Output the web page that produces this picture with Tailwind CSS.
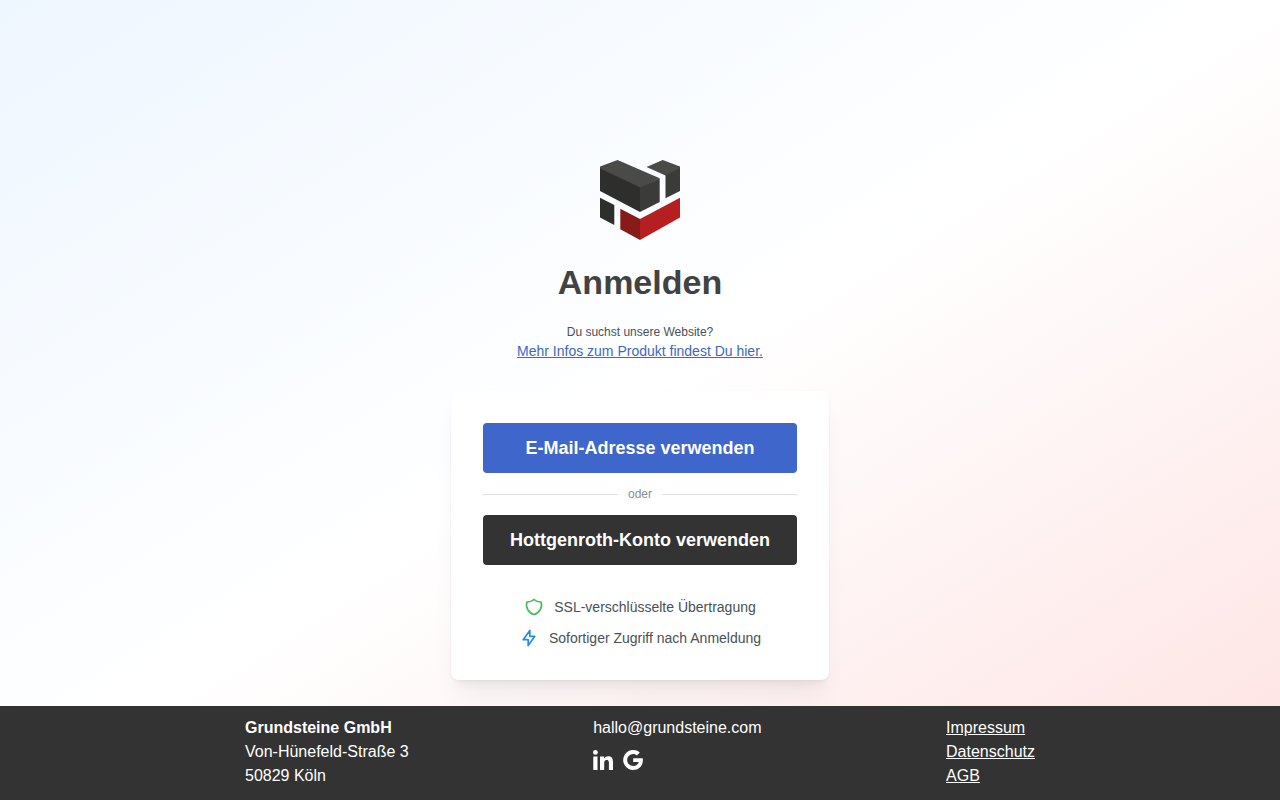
<!DOCTYPE html>
<html lang="de">
<head>
    <meta charset="UTF-8">
    <meta name="viewport" content="width=device-width, initial-scale=1.0">
    <title>Anmelden - Grundsteine</title>

    <!-- Tailwind CSS -->
    <script src="https://cdn.jsdelivr.net/npm/@tailwindcss/browser@4"></script>
</head>
<body class="font-['Liberation_Sans',Arial,sans-serif]">

    <div class="min-h-screen flex flex-col bg-[linear-gradient(to_bottom_right,#eef6ff,#ffffff,#fee2e2)]">

        <!-- Login -->
        <main class="flex-1 flex flex-col items-center px-4 pt-40 pb-6">
            <svg class="size-20" viewBox="0 0 80 80" role="img" aria-label="Grundsteine">
                <path fill="#4a4a48" d="M0 6.500 17.500 0 59.700 18.300 40 28 0 10z"/>
                <path fill="#2e2e2c" d="M0 8.500 40 27.300V52L0 31z"/>
                <path fill="#3b3b3a" d="M40 27.300 59.700 18.300V42L40 52z"/>
                <path fill="#4a4a48" d="M46.500 7 62.700 0 80 6.500V9L66 15.800z"/>
                <path fill="#3b3b3a" d="M65.500 15.300 80 8.300V31L65.500 38.300z"/>
                <path fill="#2e2e2c" d="M0 37.700 14.300 45V65L0 57.500z"/>
                <path fill="#881a1a" d="M20.300 48.800 40 59V80L20.300 69.200z"/>
                <path fill="#b51f20" d="M40 59 80 37.700V57.500L40 80z"/>
            </svg>

            <h1 class="mt-5 text-[34px] leading-[44px] font-bold text-[#424242]">Anmelden</h1>

            <div class="mt-[19px] text-center text-[#495057]">
                <p class="text-xs leading-[18px]">Du suchst unsere Website?</p>
                <p class="text-sm leading-5"><a href="#" class="text-[#3e66cb] underline">Mehr Infos zum Produkt findest Du hier.</a></p>
            </div>

            <div class="mt-[30px] w-full max-w-[378px] p-8 rounded-lg bg-white shadow-[0_1px_3px_rgba(0,0,0,0.05),0_20px_25px_-5px_rgba(0,0,0,0.05),0_10px_10px_-5px_rgba(0,0,0,0.04)]">
                <button type="button" class="block w-full h-[50px] rounded bg-[#3e66cb] text-lg font-bold text-white">E-Mail-Adresse verwenden</button>
                <div class="flex items-center gap-2.5 h-[42px] text-xs text-[#868e96]">
                    <span class="flex-1 border-t border-[#dee2e6]"></span>
                    oder
                    <span class="flex-1 border-t border-[#dee2e6]"></span>
                </div>
                <button type="button" class="block w-full h-[50px] rounded bg-[#333333] text-lg font-bold text-white">Hottgenroth-Konto verwenden</button>

                <ul class="mt-[31px] flex flex-col items-center gap-2.5 text-sm text-[#495057]">
                    <li class="flex items-center gap-2.5 h-[21px]">
                        <svg class="size-5 text-[#40c057]" viewBox="0 0 24 24" fill="none" stroke="currentColor" stroke-width="2" stroke-linecap="round" stroke-linejoin="round">
                            <path d="M12 3a12 12 0 0 0 8.500 3a12 12 0 0 1 -8.500 15a12 12 0 0 1 -8.500 -15a12 12 0 0 0 8.500 -3"/>
                        </svg>
                        SSL-verschlüsselte Übertragung
                    </li>
                    <li class="flex items-center gap-2.5 h-[21px]">
                        <svg class="size-5 text-[#228be6]" viewBox="0 0 24 24" fill="none" stroke="currentColor" stroke-width="2" stroke-linecap="round" stroke-linejoin="round">
                            <path d="M13 3v7h6l-8 11v-7h-6l8 -11"/>
                        </svg>
                        Sofortiger Zugriff nach Anmeldung
                    </li>
                </ul>
            </div>
        </main>

        <!-- Footer -->
        <footer class="bg-[#333333] px-4 pt-2.5 pb-3 text-base leading-6 text-white">
            <div class="max-w-[790px] mx-auto flex flex-wrap justify-between gap-x-6">
                <address class="not-italic">
                    <strong>Grundsteine GmbH</strong><br>
                    Von-Hünefeld-Straße 3<br>
                    50829 Köln
                </address>
                <div>
                    <p>hallo@grundsteine.com</p>
                    <div class="mt-2.5 flex gap-2.5">
                        <a href="#" aria-label="LinkedIn">
                            <svg class="size-5" viewBox="0 0 20 20" fill="currentColor">
                                <circle cx="2.4" cy="2.4" r="2.4"/>
                                <path d="M.3 6.600h4.200V20H.3zM7 6.600H11v1.900h.1c.6-1.100 1.900-2.200 4-2.200 4.100 0 4.900 2.700 4.900 6.300V20h-4.100v-6.500c0-1.600 0-3.600-2.200-3.600s-2.500 1.700-2.500 3.500V20H7z"/>
                            </svg>
                        </a>
                        <a href="#" aria-label="Google">
                            <svg class="size-5" viewBox="0 0 20 20" fill="currentColor">
                                <path d="M10.200 8.200v3.900h5.600c-.5 2.300-2.500 4-5.600 4a6.100 6.100 0 1 1 0-12.200c1.500 0 2.700.5 3.700 1.500l2.900-2.900A10 10 0 1 0 10 20c5.900 0 9.900-4.100 9.900-9.900 0-.7-.1-1.300-.2-1.900z"/>
                            </svg>
                        </a>
                    </div>
                </div>
                <nav class="flex flex-col items-start">
                    <a href="#" class="underline">Impressum</a>
                    <a href="#" class="underline">Datenschutz</a>
                    <a href="#" class="underline">AGB</a>
                </nav>
            </div>
        </footer>
    </div>

</body>
</html>
